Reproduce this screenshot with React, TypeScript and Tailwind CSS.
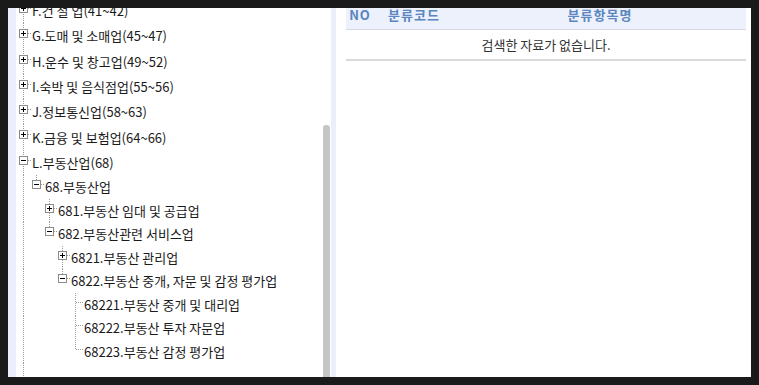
type Node = {
  label: string;
  open?: boolean;
  children?: Node[];
};

const tree: Node[] = [
  { label: "F.건 설 업(41~42)", children: [] },
  { label: "G.도매 및 소매업(45~47)", children: [] },
  { label: "H.운수 및 창고업(49~52)", children: [] },
  { label: "I.숙박 및 음식점업(55~56)", children: [] },
  { label: "J.정보통신업(58~63)", children: [] },
  { label: "K.금융 및 보험업(64~66)", children: [] },
  {
    label: "L.부동산업(68)",
    open: true,
    children: [
      {
        label: "68.부동산업",
        open: true,
        children: [
          { label: "681.부동산 임대 및 공급업", children: [] },
          {
            label: "682.부동산관련 서비스업",
            open: true,
            children: [
              { label: "6821.부동산 관리업", children: [] },
              {
                label: "6822.부동산 중개, 자문 및 감정 평가업",
                open: true,
                children: [
                  { label: "68221.부동산 중개 및 대리업" },
                  { label: "68222.부동산 투자 자문업" },
                  { label: "68223.부동산 감정 평가업" },
                ],
              },
            ],
          },
        ],
      },
    ],
  },
];

type Row = {
  node: Node;
  level: number;
  last: boolean;
  // for every ancestor level: does its line keep going past this row
  through: boolean[];
};

function flatten(nodes: Node[], level: number, through: boolean[], out: Row[], moreAfter: boolean) {
  nodes.forEach((node, i) => {
    // the top level goes on below the visible part (M., N. ...)
    const last = i === nodes.length - 1 && !moreAfter;
    out.push({ node, level, last, through });
    if (node.open && node.children) {
      flatten(node.children, level + 1, [...through, !last], out, false);
    }
  });
  return out;
}

const rows = flatten(tree, 0, [], [], true);

const DOT = "#9a9a9a";

function Guide({
  h,
  up,
  down,
  arm,
  box,
}: {
  h: number;
  up?: boolean;
  down?: boolean;
  arm?: boolean;
  box?: "plus" | "minus";
}) {
  const cy = Math.floor(h / 2) - 2 + 0.5;
  return (
    <svg width="13" height={h} viewBox={`0 0 13 ${h}`} shapeRendering="crispEdges" className="shrink-0">
      {up && <line x1="4.5" y1="0" x2="4.5" y2={cy} stroke={DOT} strokeDasharray="1 1" />}
      {down && <line x1="4.5" y1={cy} x2="4.5" y2={h} stroke={DOT} strokeDasharray="1 1" />}
      {arm && <line x1={box ? 9 : 5} y1={cy} x2="13" y2={cy} stroke={DOT} strokeDasharray="1 1" />}
      {box && (
        <g>
          <rect x="0.5" y={cy - 4} width="8" height="8" fill="#fff" stroke="#8c8c8c" />
          <line x1="2" y1={cy} x2="7" y2={cy} stroke="#000" />
          {box === "plus" && <line x1="4.5" y1={cy - 2.5} x2="4.5" y2={cy + 2.5} stroke="#000" />}
        </g>
      )}
    </svg>
  );
}

function TreeRow({ row }: { row: Row }) {
  const h = row.level === 0 ? 25.3 : 23.5;
  const { node } = row;
  const box = node.children ? (node.open ? "minus" : "plus") : undefined;
  return (
    <div className="flex items-start" style={{ height: h }}>
      {row.through.map((t, k) => (
        <Guide key={k} h={h} up={t} down={t} />
      ))}
      <Guide h={h} up down={!row.last} arm box={box} />
      <span className="whitespace-nowrap self-center text-[13px] leading-[15px] text-[#1a1a1a]">
        {node.label}
      </span>
    </div>
  );
}

export default function App() {
  return (
    <div className="w-[759px] h-[385px] bg-[#1a1a1a] p-2 font-['Noto_Sans_CJK_KR','Malgun_Gothic',sans-serif]">
      <div className="flex h-full">
        <div className="w-[8px] bg-[#eceffb]" />

        {/* tree panel, scrolled */}
        <div className="w-[307px] bg-white overflow-hidden">
          <div className="pl-[3px] mt-[-10px]">
            {rows.map((row, i) => (
              <TreeRow key={i} row={row} />
            ))}
            <div className="flex">
              <Guide h={40} up down />
            </div>
          </div>
        </div>

        {/* scrollbar */}
        <div className="w-[7px] bg-white flex flex-col">
          <div className="h-[117px]" />
          <div className="flex-1 bg-[#c5c5c5] rounded-t-[3px]" />
        </div>
        <div className="w-[1px] bg-white" />
        <div className="w-[5px] bg-[#eceffb]" />

        {/* result table */}
        <div className="flex-1 bg-white pl-[10px] pr-[5px]">
          <div className="grid grid-cols-[28px_80px_1fr] h-[22px] bg-[#edf1fc] border-b border-[#d5d9e3] text-[13px] leading-[14px] font-bold tracking-[1px] text-[#5b86bf]">
            <div className="text-center">NO</div>
            <div className="text-center">분류코드</div>
            <div className="text-center">분류항목명</div>
          </div>
          <div className="h-[31px] border-b-2 border-[#d9d9d9] flex items-center justify-center text-[13px] text-[#333]">
            검색한 자료가 없습니다.
          </div>
        </div>
      </div>
    </div>
  );
}
